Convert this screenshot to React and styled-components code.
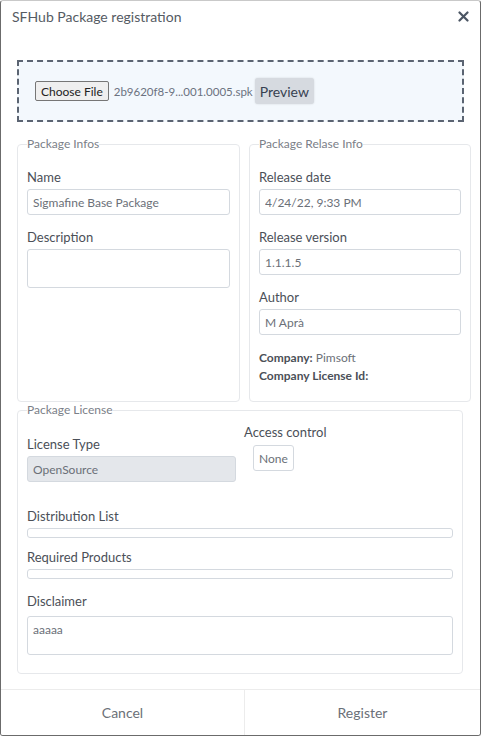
import styled, { createGlobalStyle } from "styled-components";

const GlobalStyle = createGlobalStyle`
    html, body {
        margin: 0;
        padding: 0;
        background: #ffffff;
    }
    * {
        box-sizing: border-box;
    }
`

export default function App() {
    return (
        <>
            <GlobalStyle />
            <Modal>
                <Header>
                    <Title>SFHub Package registration</Title>
                    <CloseButton aria-label="close">
                        <svg width="11" height="11" viewBox="0 0 11 11">
                            <path d="M1.5 1.5 L9.5 9.5 M9.5 1.5 L1.5 9.5" stroke="#4b5563" strokeWidth="2.2" strokeLinecap="round" />
                        </svg>
                    </CloseButton>
                </Header>

                <Body>
                    <DropZone>
                        <FileButton>Choose File</FileButton>
                        <FileName>2b9620f8-9...001.0005.spk</FileName>
                        <PreviewButton>Preview</PreviewButton>
                    </DropZone>

                    <Columns>
                        <Group width="223px" height="266px" top="17px" gap="14px">
                            <Legend>Package Infos</Legend>
                            <Field>
                                <Label>Name</Label>
                                <Input readOnly value="Sigmafine Base Package" />
                            </Field>
                            <Field>
                                <Label>Description</Label>
                                <TextArea readOnly value="" />
                            </Field>
                        </Group>

                        <Group width="222px" height="266px" top="17px" gap="14px">
                            <Legend>Package Relase Info</Legend>
                            <Field>
                                <Label>Release date</Label>
                                <Input readOnly value="4/24/22, 9:33 PM" />
                            </Field>
                            <Field>
                                <Label>Release version</Label>
                                <Input readOnly value="1.1.1.5" />
                            </Field>
                            <Field>
                                <Label>Author</Label>
                                <Input readOnly value="M Aprà" />
                            </Field>
                            <Info>
                                <div><b>Company:</b> Pimsoft</div>
                                <div><b>Company License Id:</b></div>
                            </Info>
                        </Group>
                    </Columns>

                    <Group width="446px" height="272px" top="6px" gap="11px">
                        <Legend>Package License</Legend>
                        <LicenseRow>
                            <LicenseType>
                                <Label>License Type</Label>
                                <Input readOnly disabledLook value="OpenSource" />
                            </LicenseType>
                            <Access>
                                <Label>Access control</Label>
                                <SmallBox>None</SmallBox>
                            </Access>
                        </LicenseRow>
                        <Field>
                            <Label>Distribution List</Label>
                            <ThinInput />
                        </Field>
                        <Field>
                            <Label>Required Products</Label>
                            <ThinInput />
                        </Field>
                        <Field spaced>
                            <Label>Disclaimer</Label>
                            <TextArea readOnly value="aaaaa" />
                        </Field>
                    </Group>
                </Body>

                <Footer>
                    <FooterButton width="243px">Cancel</FooterButton>
                    <FooterButton>Register</FooterButton>
                </Footer>
            </Modal>
        </>
    );
}

const Modal = styled.div`
    width: 481px;
    height: 736px;
    display: flex;
    flex-direction: column;
    background: #ffffff;
    border: 1px solid #6b6b6b;
    border-top-color: #c9c9c9;
    border-radius: 3px;
    overflow: hidden;
    font-family: Lato, "Open Sans", sans-serif;
    color: #4b5563;
`

const Header = styled.div`
    display: flex;
    align-items: center;
    justify-content: space-between;
    height: 31px;
    padding: 0 11px 0 11px;
`

const Title = styled.span`
    font-size: 14px;
    color: #555b63;
`

const CloseButton = styled.button`
    display: flex;
    align-items: center;
    justify-content: center;
    border: none;
    background: none;
    padding: 0;
    cursor: pointer;
`

const Body = styled.div`
    flex: 1;
    padding: 28px 0 0 16px;
    display: flex;
    flex-direction: column;
`

const DropZone = styled.div`
    width: 447px;
    height: 62px;
    display: flex;
    align-items: center;
    padding: 0 0 0 16px;
    background: #f3f8fd;
    border: 2px dashed #5b6472;
`

const FileButton = styled.button`
    height: 20px;
    padding: 0 5px;
    font-family: Lato, "Open Sans", sans-serif;
    font-size: 12px;
    color: #222;
    background: #efefef;
    border: 1px solid #767676;
    border-radius: 2px;
`

const FileName = styled.span`
    margin-left: 5px;
    font-size: 11.5px;
    color: #6b7280;
`

const PreviewButton = styled.button`
    height: 26px;
    margin-left: 2px;
    padding: 0 5px;
    font-family: Lato, "Open Sans", sans-serif;
    font-size: 14px;
    color: #374151;
    background: #d6dae0;
    border: none;
    border-radius: 3px;
    box-shadow: 0 0 2px rgba(0, 0, 0, 0.15);
`

const Columns = styled.div`
    display: flex;
    gap: 9px;
    margin-top: 14px;
    margin-bottom: 0;
`

const Group = styled.fieldset`
    width: ${p => p.width};
    height: ${p => p.height};
    margin: 0;
    padding: ${p => p.top} 9px 0 9px;
    border: 1px solid #e6e8eb;
    border-radius: 4px;
    display: flex;
    flex-direction: column;
    gap: ${p => p.gap};
`

const Legend = styled.legend`
    padding: 0;
    margin-left: 0;
    font-size: 12px;
    line-height: 16px;
    color: #7b8088;
`

const Field = styled.div`
    display: flex;
    flex-direction: column;
    gap: ${p => (p.spaced ? "7px" : "4px")};
    margin-top: ${p => (p.spaced ? "3px" : "0")};
`

const Label = styled.label`
    font-size: 13px;
    line-height: 16px;
    color: #4b5058;
`

const Input = styled.input`
    width: 100%;
    height: 26px;
    padding: 0 5px;
    font-family: Lato, "Open Sans", sans-serif;
    font-size: 12px;
    color: #6b7078;
    background: ${p => (p.disabledLook ? "#e4e7eb" : "#ffffff")};
    border: 1px solid #d4d9df;
    border-radius: 3px;
    outline: none;
`

const TextArea = styled.textarea`
    width: 100%;
    height: 39px;
    padding: 5px;
    resize: none;
    font-family: Lato, "Open Sans", sans-serif;
    font-size: 12px;
    color: #6b7078;
    border: 1px solid #d4d9df;
    border-radius: 3px;
    outline: none;
`

const ThinInput = styled.div`
    width: 100%;
    height: 10px;
    border: 1px solid #d4d9df;
    border-radius: 3px;
`

const Info = styled.div`
    margin-top: 0;
    font-size: 12px;
    line-height: 18px;
    color: #6b7078;

    b {
        color: #4b5058;
        font-weight: 700;
    }
`

const LicenseRow = styled.div`
    display: flex;
    align-items: flex-start;
    gap: 8px;
    margin-bottom: 15px;
`

const LicenseType = styled.div`
    width: 209px;
    display: flex;
    flex-direction: column;
    gap: 4px;
    margin-top: 12px;
`

const Access = styled.div`
    display: flex;
    flex-direction: column;
    align-items: flex-start;
    gap: 5px;
`

const SmallBox = styled.div`
    margin-left: 9px;
    height: 26px;
    padding: 0 5px;
    display: flex;
    align-items: center;
    font-size: 12px;
    color: #6b7078;
    border: 1px solid #d4d9df;
    border-radius: 3px;
`

const Footer = styled.div`
    height: 46px;
    display: flex;
    border-top: 1px solid #ececec;
`

const FooterButton = styled.button`
    flex: ${p => (p.width ? "none" : "1")};
    width: ${p => p.width || "auto"};
    border: none;
    background: #ffffff;
    font-family: Lato, "Open Sans", sans-serif;
    font-size: 14px;
    color: #6b7078;
    cursor: pointer;

    & + & {
        border-left: 1px solid #ececec;
    }
`
